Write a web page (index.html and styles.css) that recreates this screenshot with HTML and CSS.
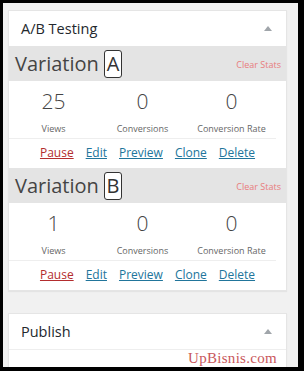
FILE: index.html
```html
<!DOCTYPE html>
<html lang="en">
<head>
    <meta charset="UTF-8">
    <meta name="viewport" content="width=device-width, initial-scale=1.0">
    <title>A/B Testing</title>
    <link rel="stylesheet" href="styles.css">
</head>
<body>
    <div class="frame">
        <div class="postbox">
            <div class="postbox-head">
                <span>A/B Testing</span>
                <span class="toggle"></span>
            </div>

            <div class="variation">
                <div class="variation-head">
                    <span class="variation-title">Variation <span class="letter">A</span></span>
                    <a href="#" class="clear-stats">Clear Stats</a>
                </div>
                <div class="stats">
                    <div class="stat">
                        <div class="stat-number">25</div>
                        <div class="stat-label">Views</div>
                    </div>
                    <div class="stat">
                        <div class="stat-number">0</div>
                        <div class="stat-label">Conversions</div>
                    </div>
                    <div class="stat">
                        <div class="stat-number">0</div>
                        <div class="stat-label">Conversion Rate</div>
                    </div>
                </div>
                <div class="actions">
                    <a href="#" class="pause">Pause</a>
                    <a href="#">Edit</a>
                    <a href="#">Preview</a>
                    <a href="#">Clone</a>
                    <a href="#">Delete</a>
                </div>
            </div>

            <div class="variation">
                <div class="variation-head">
                    <span class="variation-title">Variation <span class="letter">B</span></span>
                    <a href="#" class="clear-stats">Clear Stats</a>
                </div>
                <div class="stats">
                    <div class="stat">
                        <div class="stat-number">1</div>
                        <div class="stat-label">Views</div>
                    </div>
                    <div class="stat">
                        <div class="stat-number">0</div>
                        <div class="stat-label">Conversions</div>
                    </div>
                    <div class="stat">
                        <div class="stat-number">0</div>
                        <div class="stat-label">Conversion Rate</div>
                    </div>
                </div>
                <div class="actions">
                    <a href="#" class="pause">Pause</a>
                    <a href="#">Edit</a>
                    <a href="#">Preview</a>
                    <a href="#">Clone</a>
                    <a href="#">Delete</a>
                </div>
            </div>
        </div>

        <div class="postbox publish">
            <div class="postbox-head">
                <span>Publish</span>
                <span class="toggle"></span>
            </div>
            <div class="publish-body"></div>
        </div>

        <div class="watermark">UpBisnis.com</div>
    </div>
</body>
</html>
```

FILE: styles.css
```css
body {
    margin: 0;
    background-color: #000;
    font-family: "Open Sans", Arial, sans-serif;
}

.frame {
    position: relative;
    margin: 3px;
    width: 290px;
    height: 357px;
    padding: 7px 0 0 5px;
    background-color: #f1f1f1;
    overflow: hidden;
}

.postbox {
    width: 277px;
    background-color: #fff;
    border: 1px solid #e5e5e5;
    box-shadow: 0 1px 1px rgba(0, 0, 0, 0.05);
}

.postbox-head {
    display: flex;
    justify-content: space-between;
    align-items: center;
    height: 35px;
    padding: 0 14px 0 12px;
    font-size: 14.5px;
    color: #23282d;
}

.toggle {
    width: 0;
    height: 0;
    border-left: 4px solid transparent;
    border-right: 4px solid transparent;
    border-bottom: 5px solid #a0a5aa;
}

.variation-head {
    display: flex;
    justify-content: space-between;
    align-items: center;
    height: 35px;
    padding: 0 5px 0 6px;
    background-color: #e4e4e4;
}

.variation-title {
    font-size: 20px;
    color: #444;
}

.letter {
    display: inline-block;
    width: 16px;
    height: 26px;
    line-height: 26px;
    text-align: center;
    border: 1px solid #333;
    border-radius: 3px;
    background-color: #fff;
    color: #333;
}

.clear-stats {
    font-size: 9px;
    color: #e87c7c;
    text-decoration: none;
    margin-top: 2px;
}

.stats {
    display: flex;
    width: 267px;
    padding: 6px 0 1px;
    border-bottom: 1px solid #eee;
}

.stat {
    flex: 1;
    text-align: center;
}

.stat-number {
    font-size: 21px;
    font-weight: 300;
    line-height: 28px;
    color: #444;
}

.stat-label {
    margin-top: 6px;
    font-size: 9px;
    line-height: 16px;
    color: #666;
}

.actions {
    display: flex;
    justify-content: center;
    gap: 12px;
    padding: 4px 0 5px;
    font-size: 12px;
    line-height: 20px;
}

.actions a {
    color: #21759b;
}

.actions a.pause {
    color: #b32d2e;
}

.publish {
    margin-top: 22px;
}

.publish .postbox-head {
    border-bottom: 1px solid #eee;
}

.publish-body {
    height: 40px;
}

.watermark {
    position: absolute;
    left: 185px;
    top: 347px;
    font-family: "Liberation Serif", serif;
    font-size: 15px;
    letter-spacing: 0.3px;
    color: #c9575b;
}
```
